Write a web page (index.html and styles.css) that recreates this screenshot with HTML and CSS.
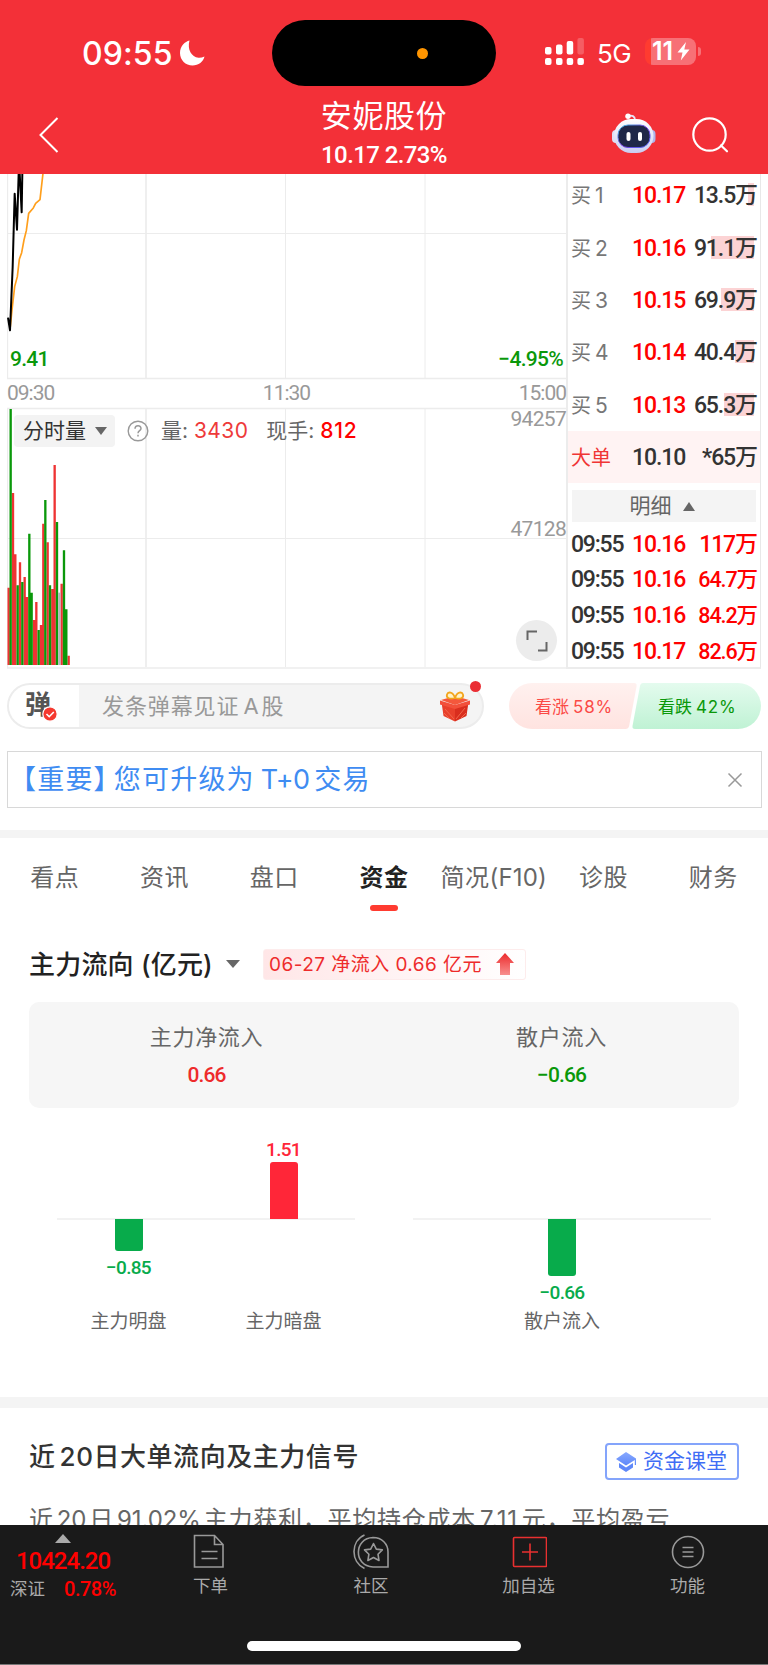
FILE: index.html
```html
<!DOCTYPE html>
<html lang="zh-CN">
<head>
    <meta charset="UTF-8">
    <meta name="viewport" content="width=device-width, initial-scale=1.0">
    <title>安妮股份</title>
    <link rel="stylesheet" href="styles.css">
</head>
<body>
    <header class="header">
        <div class="status-bar">
            <div class="status-left">
                <span class="clock">09:55</span>
                <svg class="moon" width="25" height="26" viewBox="0 0 25 26"><path d="M9.500.5C5 1.500 0 6 0 13c0 7 5.500 12.500 12.500 12.500 6 0 11-4 12-9-2 1-4 1.300-6 1.200C11.500 17 7 9.500 9.500.5z" fill="#fff"/></svg>
            </div>
            <div class="island"><span class="island-dot"></span></div>
            <div class="status-right">
                <svg width="39" height="27" viewBox="0 0 39 27" fill="#fff">
                    <rect x="0" y="9" width="6.500" height="7.500" rx="2"/>
                    <rect x="11" y="6.500" width="6.500" height="10" rx="2"/>
                    <rect x="21.700" y="3" width="6.500" height="13.500" rx="2"/>
                    <rect x="32.400" y="0" width="6.500" height="16.500" rx="2" opacity=".22"/>
                    <rect x="0" y="20" width="6.500" height="7" rx="2"/>
                    <rect x="11" y="20" width="6.500" height="7" rx="2"/>
                    <rect x="21.700" y="20" width="6.500" height="7" rx="2"/>
                    <rect x="32.400" y="20" width="6.500" height="7" rx="2"/>
                </svg>
                <span class="network">5G</span>
                <span class="battery">
                    <span class="battery-num">11</span>
                    <svg width="13" height="19" viewBox="0 0 12 19"><path d="M8.500 0L0 10.500h5L3.300 18.500 12 7.500H6.800z" fill="#fff"/></svg>
                </span>
                <span class="battery-cap"></span>
            </div>
        </div>
        <div class="nav-bar">
            <svg class="nav-back" width="20" height="36" viewBox="0 0 20 36"><path d="M18.500 1L1.500 18l17 17" fill="none" stroke="#fff" stroke-width="2"/></svg>
            <div class="nav-title">
                <h1 class="stock-name">安妮股份</h1>
                <p class="stock-price num">10.17 2.73%</p>
            </div>
            <div class="nav-actions">
                <svg width="44" height="41" viewBox="0 0 44 41">
                    <defs>
                        <linearGradient id="head" x1="0" y1="0" x2="0" y2="1"><stop offset="0" stop-color="#fff"/><stop offset="1" stop-color="#c9cdf2"/></linearGradient>
                        <linearGradient id="rim" x1="0" y1="0" x2="1" y2="1"><stop offset="0" stop-color="#39c5dc"/><stop offset=".5" stop-color="#7a3ce0"/><stop offset="1" stop-color="#4b6af0"/></linearGradient>
                    </defs>
                    <path d="M16 3c4-1 7 0 7 4" fill="none" stroke="#e6e6f8" stroke-width="1.800"/>
                    <circle cx="16" cy="3.200" r="2.700" fill="#fff"/>
                    <rect x="0" y="17" width="8" height="13" rx="4" fill="#dfe0f6"/>
                    <rect x="36" y="17" width="7.500" height="13" rx="4" fill="#aeb4ec"/>
                    <rect x="2" y="6" width="39.500" height="34" rx="17" fill="url(#head)"/>
                    <rect x="6" y="12" width="32" height="22.500" rx="10" fill="#1f2747" stroke="url(#rim)" stroke-width="1"/>
                    <rect x="14.500" y="19" width="4" height="9" rx="2" fill="#fff"/>
                    <rect x="26" y="19" width="4" height="9" rx="2" fill="#fff"/>
                </svg>
                <svg width="37" height="36" viewBox="0 0 37 36" fill="none" stroke="#fff" stroke-width="2.200"><circle cx="17.500" cy="17.500" r="16.200"/><path d="M29 28.500l6 5.800" stroke-linecap="round"/></svg>
            </div>
        </div>
    </header>

    <section class="quote">
        <div class="charts">
            <svg class="chart-canvas" width="561" height="495" viewBox="7 174 561 495">
                <g stroke="#ececec" fill="none">
                    <path d="M7 233.500h559M7 538.500h559" stroke-width="1.200"/>
                    <path d="M146 174v204M146 409v258" stroke-width="1.600"/>
                    <path d="M285.500 174v204M285.500 409v258M425 174v204M425 409v258" stroke-width="1"/>
                    <path d="M7.500 174v204.500h559M7.500 668V408.500h559" stroke-width="1.300"/>
                    <path d="M7 668h561" stroke-width="1.600"/>
                    <path d="M567 174v495" stroke-width="2"/>
                </g>
                <!-- price line and average line -->
                <g transform="translate(0 170) scale(.3333)" fill="none" stroke-linejoin="round">
                    <path d="M31 470l5-50 8-70 8-30 6-52 7-20 7-38 7-28 7-52 14-16 7-14 13-11 9-79" stroke="#ff9f1c" stroke-width="5"/>
                    <path d="M24 443l6 38 8-190 6-220 7 108 5-170 3 0 6 118 2-118" stroke="#000" stroke-width="6"/>
                </g>
                <!-- volume bars -->
                <g transform="translate(0 400) scale(.3333)" fill="none" stroke-width="7">
                    <path stroke="#ee3333" d="M26 563V795M39 279V795M46 463V795M60 487V795M74 531V795M81 591V795M102 660V795M109 606V795M123 675V795M130 371V795M143 427V795M157 567V795M164 195V795M185 551V795M206 767V795"/>
                    <path stroke="#0a980a" d="M32 27V795M53 556V795M67 546V795M88 401V795M95 578V795M116 690V795M136 300V795M150 556V795M171 366V795M192 451V795M199 628V795"/>
                    <path stroke="#b5b5b5" d="M178 578V795"/>
                </g>
            </svg>
            <div class="chart-labels">
                <div class="label-row price-low num"><span>9.41</span><span>−4.95%</span></div>
                <div class="label-row time-axis num"><span>09:30</span><span>11:30</span><span>15:00</span></div>
                <div class="volume-head">
                    <span class="volume-select">分时量<i class="caret-down"></i></span>
                    <svg class="help" width="22" height="22" viewBox="0 0 22 22"><circle cx="11" cy="11" r="9.800" fill="none" stroke="#999" stroke-width="1.400"/><path d="M8 8.800c0-4 6-4 6-.3 0 2.200-3 2.200-3 4.800M11 14.800v1.700" fill="none" stroke="#999" stroke-width="1.500"/></svg>
                    <span class="volume-text">量: <b class="vol">3430</b></span>
                    <span class="volume-text">现手: <b class="hand">812</b></span>
                </div>
                <span class="vol-max num">94257</span>
                <span class="vol-mid num">47128</span>
                <span class="expand"><svg width="22" height="22" viewBox="0 0 22 22" fill="none" stroke="#666" stroke-width="2"><path d="M1.500 10V1.500H11M20.500 12v8.500H12"/></svg></span>
            </div>
        </div>

        <aside class="depth">
            <ul class="bids">
                <li class="bid"><span class="bid-label">买<em>1</em></span><span class="bid-price num">10.17</span><span class="bid-vol num"><i class="depth-bar" style="width: 6px"></i>13.5万</span></li>
                <li class="bid"><span class="bid-label">买<em>2</em></span><span class="bid-price num">10.16</span><span class="bid-vol num"><i class="depth-bar" style="width: 43px"></i>91.1万</span></li>
                <li class="bid"><span class="bid-label">买<em>3</em></span><span class="bid-price num">10.15</span><span class="bid-vol num"><i class="depth-bar" style="width: 33px"></i>69.9万</span></li>
                <li class="bid"><span class="bid-label">买<em>4</em></span><span class="bid-price num">10.14</span><span class="bid-vol num"><i class="depth-bar" style="width: 19px"></i>40.4万</span></li>
                <li class="bid"><span class="bid-label">买<em>5</em></span><span class="bid-price num">10.13</span><span class="bid-vol num"><i class="depth-bar" style="width: 30px"></i>65.3万</span></li>
                <li class="bid big-order"><span class="bid-label">大单</span><span class="bid-price num">10.10</span><span class="bid-vol num">*65万</span></li>
            </ul>
            <div class="detail-toggle">明细<i class="caret-up"></i></div>
            <ul class="trades num">
                <li class="trade"><span>09:55</span><b>10.16</b><b class="amount">117万</b></li>
                <li class="trade"><span>09:55</span><b>10.16</b><b class="amount small">64.7万</b></li>
                <li class="trade"><span>09:55</span><b>10.16</b><b class="amount small">84.2万</b></li>
                <li class="trade"><span>09:55</span><b>10.17</b><b class="amount small">82.6万</b></li>
            </ul>
        </aside>
    </section>

    <section class="barrage">
        <div class="barrage-input">
            <span class="barrage-switch">弹<svg class="check" width="16" height="16" viewBox="0 0 16 16"><circle cx="8" cy="8" r="7.200" fill="#f5392f" stroke="#fff" stroke-width="1.200"/><path d="M4.500 8l2.700 2.700L11.800 6" fill="none" stroke="#fff" stroke-width="1.600"/></svg></span>
            <span class="barrage-placeholder">发条弹幕见证<span class="latin">A</span>股</span>
            <svg class="gift" width="30" height="32" viewBox="0 0 30 32">
                <path d="M1 10l14-4 14 4-14 5z" fill="#f4583c"/>
                <path d="M1.500 12L15 16v15.500L3.500 26z" fill="#e8402b"/>
                <path d="M28.500 12L15 16v15.500L26.500 26z" fill="#d92e1e"/>
                <path d="M0 10.500l15 4.500v4L0 14.500zM30 10.500L15 15v4l15-4.500z" fill="#f2503a"/>
                <path d="M5 19l9 10M4 23l6 6M25 18l-9 11M26 23l-5 5" stroke="#f2664a" stroke-width="1"/>
                <path d="M15 8C9 9.500 6 7.500 7 4.500s6-3 8 3.500zM15 8c6 1.500 9-.5 8-3.500s-6-3-8 3.500z" fill="#fff3c8" stroke="#f3a51c" stroke-width="1.800"/>
            </svg>
            <i class="red-dot"></i>
        </div>
        <div class="votes">
            <svg class="vote-shape" width="252" height="46" viewBox="0 0 252 46">
                <defs>
                    <linearGradient id="up" x1="0" y1="0" x2="0" y2="1"><stop offset="0" stop-color="#fff1ef"/><stop offset="1" stop-color="#ffe3e0"/></linearGradient>
                    <linearGradient id="down" x1="0" y1="0" x2="0" y2="1"><stop offset="0" stop-color="#e4fbee"/><stop offset="1" stop-color="#bff2d4"/></linearGradient>
                </defs>
                <path d="M23 0h102q3 0 2.600 3l-7.500 40q-.6 3-3.600 3H23a23 23 0 0 1 0-46z" fill="url(#up)"/>
                <path d="M134 0h95a23 23 0 0 1 0 46H126q-3 0-2.500-3l7.500-40q.6-3 3-3z" fill="url(#down)"/>
            </svg>
            <span class="vote vote-up">看涨<em>58%</em></span>
            <span class="vote vote-down">看跌<em>42%</em></span>
        </div>
    </section>

    <div class="notice">
        <span class="notice-text">【重要】<span class="notice-main">您可升级为<span class="latin">T+0</span>交易</span></span>
        <svg width="16" height="16" viewBox="0 0 16 16"><path d="M1.500 1.500l13 13M14.500 1.500l-13 13" stroke="#999" stroke-width="1.500"/></svg>
    </div>

    <nav class="tabs">
        <a class="tab">看点</a>
        <a class="tab">资讯</a>
        <a class="tab">盘口</a>
        <a class="tab active">资金</a>
        <a class="tab">简况<span>(F10)</span></a>
        <a class="tab">诊股</a>
        <a class="tab">财务</a>
    </nav>

    <section class="flow">
        <div class="flow-head">
            <h2 class="flow-title">主力流向 (亿元)</h2>
            <i class="caret-down"></i>
            <span class="flow-badge"><span>06-27 净流入 0.66 亿元</span>
                <svg width="18" height="22" viewBox="0 0 18 22"><defs><linearGradient id="arrow" x1="0" y1="0" x2="0" y2="1"><stop offset="0" stop-color="#ec2a2c"/><stop offset="1" stop-color="#f8908f"/></linearGradient></defs><path d="M9 0l9 10h-4v12H4V10H0z" fill="url(#arrow)"/></svg>
            </span>
        </div>
        <div class="flow-card">
            <div class="flow-item"><span class="flow-name">主力净流入</span><span class="flow-value num up">0.66</span></div>
            <div class="flow-item"><span class="flow-name">散户流入</span><span class="flow-value num down">−0.66</span></div>
        </div>
        <div class="bar-charts">
            <div class="bar-chart">
                <div class="bar-col negative"><i class="bar" style="height: 32px"></i><span class="bar-value num">−0.85</span><span class="bar-name">主力明盘</span></div>
                <div class="bar-col positive"><span class="bar-value num">1.51</span><i class="bar" style="height: 57px"></i><span class="bar-name">主力暗盘</span></div>
            </div>
            <div class="bar-chart">
                <div class="bar-col negative"><i class="bar" style="height: 57px"></i><span class="bar-value num">−0.66</span><span class="bar-name">散户流入</span></div>
            </div>
        </div>
    </section>

    <section class="signal">
        <div class="signal-head">
            <h2 class="signal-title">近<span>20</span>日大单流向及主力信号</h2>
            <a class="course">
                <svg width="20" height="20" viewBox="0 0 20 20"><defs><linearGradient id="cap" x1="0" y1="0" x2="0" y2="1"><stop offset="0" stop-color="#89a9ff"/><stop offset="1" stop-color="#5d87f9"/></linearGradient></defs><path d="M10 0L20 6.500V13h-1.200V8L10 13.500 0 7z" fill="url(#cap)"/><path d="M3 11l7 4.500 7-4.500v4.500L10 20l-7-4.500z" fill="#5f88f9"/></svg>
                <span>资金课堂</span>
            </a>
        </div>
        <p class="signal-text">近<span>20</span>日<span>91.02%</span>主力获利，平均持仓成本<span class="cost">7.11</span>元，平均盈亏</p>
    </section>

    <footer class="bottom-bar">
        <div class="index-box">
            <i class="caret-up"></i>
            <span class="index-value num">10424.20</span>
            <div class="index-line"><span>深证</span><span class="index-rate num">0.78%</span></div>
        </div>
        <div class="bottom-tabs">
            <a class="bottom-tab">
                <svg width="36" height="36" viewBox="0 0 36 36" fill="none" stroke="#999" stroke-width="1.600"><path d="M1.500 1.500h20l8.500 9v22.500h-28.500zM21.500 1.500v9h8.500M8.500 17.500h16M8.500 24.500h16"/></svg>
                <span>下单</span>
            </a>
            <a class="bottom-tab community">
                <svg width="36" height="36" viewBox="0 0 36 36" fill="none" stroke="#999" stroke-width="1.600"><path d="M11.500 1C-2.500 7-2.500 28 11.500 34.500M35 33H20C0 32 1 4 20 3.500 29 3.500 35 10 35 18z"/><path d="M20.500 9.500l2.800 5.600 6 .8-4.300 4.300 1 6.300-5.500-3-5.600 3 1-6.300-4.400-4.300 6.200-.8z" stroke-linejoin="round"/></svg>
                <span>社区</span>
            </a>
            <a class="bottom-tab">
                <svg width="36" height="36" viewBox="0 0 36 36" fill="none" stroke="#e93030" stroke-width="1.600"><rect x="2.500" y="3.500" width="33" height="29" rx="1"/><path d="M19 9.500v17M11 18h16"/></svg>
                <span>加自选</span>
            </a>
            <a class="bottom-tab">
                <svg width="36" height="36" viewBox="0 0 36 36" fill="none" stroke="#999" stroke-width="1.600"><circle cx="18" cy="18" r="15.500"/><path d="M12.500 13.500h11M12.500 18h11M12.500 22.500h11"/></svg>
                <span>功能</span>
            </a>
        </div>
        <div class="home-indicator"></div>
    </footer>
</body>
</html>
```
FILE: styles.css
```css
* {
    margin: 0;
    padding: 0;
    box-sizing: border-box;
}

body {
    width: 768px;
    height: 1665px;
    overflow: hidden;
    background: #fff;
    color: #333;
    font-family: Inter, 'Noto Sans CJK SC', sans-serif;
}

ul {
    list-style: none;
}

em,
i {
    font-style: normal;
}

svg {
    display: block;
    flex: none;
}

.num {
    font-family: Roboto, 'Noto Sans CJK SC', sans-serif;
    font-weight: 500;
}

.up {
    color: #ee2b2b;
}

.down {
    color: #0a980a;
}

.caret-down,
.caret-up {
    width: 0;
    height: 0;
    border: 6px solid transparent;
}

.caret-down {
    border-top: 8px solid #666;
    border-bottom: 0;
}

.caret-up {
    border-bottom: 9px solid #666;
    border-top: 0;
}

/* header */
.header {
    height: 174px;
    background: #f33038;
    color: #fff;
}

.status-bar {
    display: flex;
    height: 98px;
    padding-top: 20px;
}

.status-left {
    display: flex;
    width: 272px;
    padding: 20px 0 0 82px;
}

.clock {
    width: 98px;
    font-size: 32px;
    font-weight: 500;
    line-height: 28px;
    letter-spacing: 0.1px;
}

.island {
    display: flex;
    align-items: center;
    width: 224px;
    height: 66px;
    padding-left: 145px;
    border-radius: 33px;
    background: #000;
}

.island-dot {
    width: 11px;
    height: 11px;
    border-radius: 50%;
    background: #ff9500;
}

.status-right {
    display: flex;
    padding: 18px 0 0 49px;
}

.network {
    width: 61px;
    padding-left: 13px;
    font-size: 26px;
    line-height: 31px;
    letter-spacing: -0.5px;
}

.battery {
    display: flex;
    align-items: center;
    width: 51px;
    height: 27px;
    padding-left: 7px;
    border-radius: 8px;
    background: linear-gradient(90deg, #ff3b30 6px, #f77076 6px);
}

.battery-num {
    width: 25px;
    font-size: 25px;
    font-weight: 600;
    line-height: 27px;
}

.battery-cap {
    width: 3px;
    height: 9px;
    margin: 9px 0 0 2px;
    border-radius: 0 4px 4px 0;
    background: #f77076;
}

.nav-bar {
    display: grid;
    grid-template-columns: 156px 1fr 156px;
    height: 76px;
    padding: 0 39px;
}

.nav-back {
    margin-top: 19px;
}

.nav-title {
    text-align: center;
}

.stock-name {
    font-size: 31px;
    font-weight: 400;
    line-height: 36px;
    letter-spacing: 0.6px;
}

.stock-price {
    margin-top: 7px;
    font-size: 24px;
    line-height: 28px;
    letter-spacing: -0.6px;
}

.nav-actions {
    display: flex;
    justify-content: flex-end;
    gap: 36px;
    padding-top: 15px;
}

.nav-actions svg + svg {
    margin-top: 4px;
}

/* charts and order book */
.quote {
    display: flex;
    height: 495px;
    padding: 0 7px;
}

.charts {
    position: relative;
    width: 561px;
}

.chart-labels {
    position: absolute;
    inset: 0;
    padding-top: 172px;
}

.label-row {
    display: flex;
    justify-content: space-between;
    font-size: 21px;
    line-height: 26px;
    letter-spacing: -0.7px;
}

.price-low {
    padding: 0 5px 0 3px;
    color: #0a980a;
}

.time-axis {
    margin-top: 8px;
    padding-right: 2px;
    color: #999;
    font-weight: 400;
    letter-spacing: -1px;
}

.volume-head {
    display: flex;
    align-items: center;
    height: 32px;
    margin: 9px 0 0 7px;
}

.volume-select {
    display: flex;
    align-items: center;
    width: 101px;
    height: 32px;
    padding-left: 9px;
    border-radius: 4px;
    background: #f3f3f3;
    font-size: 21px;
    line-height: 32px;
}

.volume-select .caret-down {
    margin-left: 9px;
}

.help {
    margin: 0 12px 0 12px;
}

.volume-text {
    height: 32px;
    margin-right: 18px;
    color: #666;
    font-size: 21px;
    line-height: 32px;
    white-space: nowrap;
}

.volume-text b {
    font-weight: 400;
}

.vol {
    color: #ee3a3a;
    letter-spacing: 0.4px;
}

.volume-text .hand {
    color: #f00;
    font-weight: 500;
    letter-spacing: 0.7px;
}

.vol-max,
.vol-mid,
.expand {
    position: absolute;
    right: 2px;
    color: #999;
    font-size: 21px;
    font-weight: 400;
    line-height: 24px;
    letter-spacing: -0.7px;
}

.vol-max {
    top: 233px;
}

.vol-mid {
    top: 343px;
}

.expand {
    display: flex;
    align-items: center;
    justify-content: center;
    top: 446px;
    right: 11px;
    width: 41px;
    height: 41px;
    border-radius: 50%;
    background: #ececec;
}

.depth {
    width: 193px;
    overflow: hidden;
    border-right: 1px solid #e8e8e8;
    border-bottom: 2px solid #ececec;
}

.bids {
    margin-top: -5px;
}

.bid {
    display: flex;
    align-items: center;
    height: 52.4px;
    padding: 2px 3px 0 3px;
    font-size: 23px;
    line-height: 30px;
}

.bid-label {
    width: 61px;
    color: #777;
    font-size: 20px;
}

.bid-label em {
    margin-left: 4px;
    font-size: 21px;
}

.bid-price {
    width: 55px;
    color: #f00;
    letter-spacing: -1.1px;
}

.bid-vol {
    position: relative;
    flex: 1;
    text-align: right;
    letter-spacing: -1.1px;
    white-space: nowrap;
}

.depth-bar {
    position: absolute;
    top: 2px;
    right: 3px;
    z-index: -1;
    height: 23px;
    background: #fcd3d4;
}

.big-order {
    background: #fff3f3;
}

.big-order .bid-label {
    color: #f03535;
}

.big-order .bid-price {
    color: #333;
}

.detail-toggle {
    display: flex;
    align-items: center;
    justify-content: center;
    height: 32px;
    margin: 7px 4px 3px;
    padding: 0 4px 0 0;
    background: #f4f4f4;
    color: #666;
    font-size: 21px;
    line-height: 32px;
}

.detail-toggle .caret-up {
    margin-left: 11px;
}

.trade {
    display: flex;
    align-items: center;
    height: 35.7px;
    padding: 3px 3px 0 3px;
    font-size: 23px;
    line-height: 32px;
    letter-spacing: -1.1px;
}

.trade span {
    width: 61px;
    letter-spacing: -1.2px;
}

.trade b {
    color: #f00;
    font-weight: 500;
}

.trade .amount {
    flex: 1;
    text-align: right;
    white-space: nowrap;
}

.trade .small {
    font-size: 21.5px;
}

/* barrage */
.barrage {
    display: flex;
    justify-content: space-between;
    padding: 14px 7px 0 7px;
}

.barrage-input {
    position: relative;
    display: flex;
    align-items: center;
    width: 477px;
    height: 46px;
    border: 2px solid #ececec;
    border-radius: 23px;
    background: #f4f4f4;
}

.barrage-switch {
    position: relative;
    width: 70px;
    height: 42px;
    padding-left: 16px;
    border-radius: 21px 0 0 21px;
    background: #fff;
    color: #555;
    font-size: 26px;
    font-weight: 700;
    line-height: 40px;
}

.check {
    position: absolute;
    left: 33px;
    top: 21px;
}

.barrage-placeholder {
    width: 361px;
    padding-left: 23px;
    color: #999;
    font-size: 22px;
    line-height: 42px;
    letter-spacing: 0.9px;
}

.barrage-placeholder .latin {
    margin: 0 2px 0 4px;
}

.red-dot {
    position: absolute;
    right: 1px;
    top: -4px;
    width: 11px;
    height: 11px;
    border-radius: 50%;
    background: #ea2e34;
}

.votes {
    position: relative;
    display: flex;
    width: 252px;
    height: 46px;
}

.vote-shape {
    position: absolute;
    inset: 0;
}

.vote {
    position: relative;
    width: 126px;
    padding-left: 26px;
    font-size: 17px;
    line-height: 48px;
    white-space: nowrap;
}

.vote em {
    margin-left: 4px;
    letter-spacing: 0.8px;
}

.vote-up {
    color: #fb4a46;
}

.vote-down {
    padding-left: 23px;
    color: #0a980a;
}

.notice {
    display: flex;
    align-items: center;
    justify-content: space-between;
    height: 57px;
    margin: 22px 6px 22px 7px;
    padding: 0 18px 0 1px;
    border: 1px solid #d8d8d8;
}

.notice-text {
    display: flex;
    height: 56px;
    color: #3f8cf2;
    font-size: 27px;
    line-height: 56px;
    letter-spacing: 1.2px;
}

.notice-main {
    margin-left: -8px;
}

.notice-text .latin {
    margin: 0 5px 0 6px;
    letter-spacing: -0.6px;
}

.tabs {
    display: flex;
    height: 104px;
    border-top: 8px solid #f4f4f4;
}

.tab {
    flex: 1 0 0;
    display: flex;
    justify-content: center;
    height: 74px;
    padding-top: 20px;
    color: #666;
    font-size: 24px;
    line-height: 40px;
    letter-spacing: 0.5px;
    white-space: nowrap;
}

.tab span {
    letter-spacing: 0.2px;
}

.active {
    position: relative;
    color: #222;
    font-weight: 600;
}

.active::after {
    content: '';
    position: absolute;
    left: 41px;
    bottom: 1px;
    width: 28px;
    height: 6px;
    border-radius: 3px;
    background: #ff3b30;
}

/* fund flow */
.flow {
    height: 463px;
    padding: 14px 29px 0;
}

.flow-head {
    display: flex;
    align-items: center;
    height: 32px;
}

.flow-title {
    width: 197px;
    height: 32px;
    color: #222;
    font-size: 26px;
    font-weight: 500;
    line-height: 33px;
    letter-spacing: 0.2px;
    white-space: nowrap;
}

.flow-head .caret-down {
    border-width: 8px 7px 0;
}

.flow-badge {
    display: flex;
    align-items: center;
    justify-content: space-between;
    width: 263px;
    height: 31px;
    margin-left: 23px;
    padding: 0 11px 0 5px;
    border: 1px solid #fdecec;
    border-radius: 3px;
    background: linear-gradient(90deg, #ffe6e7, #fff);
    color: #ee2b2b;
    font-size: 19px;
    line-height: 29px;
    letter-spacing: 0.45px;
    white-space: nowrap;
}

.flow-card {
    display: flex;
    height: 106px;
    margin-top: 22px;
    padding-top: 18px;
    border-radius: 10px;
    background: #f6f6f6;
}

.flow-item {
    display: flex;
    flex: 1;
    flex-direction: column;
    align-items: center;
}

.flow-name {
    color: #666;
    font-size: 22px;
    line-height: 34px;
    letter-spacing: 0.7px;
}

.flow-value {
    margin-top: 7px;
    font-size: 21px;
    line-height: 29px;
    letter-spacing: -0.9px;
}

.bar-charts {
    display: flex;
    gap: 58px;
    padding: 26px 28px 0;
}

.bar-chart {
    display: flex;
    justify-content: center;
    width: 298px;
    height: 204px;
    background: linear-gradient(#f2f2f2, #f2f2f2) 0 84px / 100% 2px no-repeat;
}

.bar-col {
    display: flex;
    flex: 1;
    flex-direction: column;
    align-items: center;
}

.bar-chart .bar-col:first-child:not(:last-child) {
    padding-right: 5px;
}

.bar-chart .bar-col:nth-child(2) {
    padding-left: 7px;
}

.bar {
    flex: none;
    width: 28px;
}

.bar-value {
    font-size: 19px;
    line-height: 24px;
    letter-spacing: -0.7px;
}

.positive {
    padding-top: 4px;
    color: #ff2638;
}

.positive .bar {
    border-radius: 3px 3px 0 0;
    background: #ff2638;
}

.negative {
    padding-top: 85px;
    color: #08ab4b;
}

.negative .bar {
    border-radius: 0 0 3px 3px;
    background: #08ab4b;
}

.negative .bar-value {
    margin-top: 5px;
}

.bar-name {
    margin-top: auto;
    color: #666;
    font-size: 19px;
    line-height: 32px;
}

.signal {
    height: 128px;
    padding: 34px 29px 0;
    border-top: 11px solid #f4f4f4;
    overflow: hidden;
}

.signal-head {
    display: flex;
    justify-content: space-between;
    height: 46px;
}

.signal-title {
    color: #333;
    font-size: 26px;
    font-weight: 500;
    line-height: 30px;
    letter-spacing: 0.55px;
}

.signal-title span {
    margin: 0 0 0 4px;
}

.course {
    display: flex;
    align-items: center;
    gap: 7px;
    width: 134px;
    height: 37px;
    margin-top: 1px;
    padding: 0 9px 0 9px;
    border: 2px solid #84a4fb;
    border-radius: 4px;
    color: #3f6df5;
    font-size: 21px;
    white-space: nowrap;
}

.course span {
    height: 33px;
    line-height: 32px;
}

.signal-text {
    margin-top: 12px;
    color: #666;
    font-size: 24px;
    line-height: 40px;
    letter-spacing: 0.75px;
    white-space: nowrap;
}

.signal-text span {
    margin: 0 3px;
    letter-spacing: -0.1px;
}

.signal-text .cost {
    margin: 0 4px;
    letter-spacing: 0.7px;
}

/* bottom bar */
.bottom-bar {
    position: relative;
    display: flex;
    height: 140px;
    border-bottom: 1px solid #777;
    background: #1a1a1a;
    color: #aaa;
}

.index-box {
    display: flex;
    flex-direction: column;
    align-items: center;
    width: 126px;
    padding-top: 9px;
}

.index-box .caret-up {
    border-width: 0 8px 9px;
    border-bottom-color: #aaa;
}

.index-value {
    margin-top: 5px;
    color: #f00;
    font-size: 24px;
    line-height: 26px;
    letter-spacing: -1px;
}

.index-line {
    display: flex;
    gap: 19px;
    margin-top: 2px;
    font-size: 17.5px;
    line-height: 26px;
}

.index-rate {
    color: #f00;
    font-size: 20px;
    letter-spacing: -0.5px;
}

.bottom-tabs {
    display: flex;
    flex: 1;
}

.bottom-tab {
    display: flex;
    flex-direction: column;
    align-items: center;
    width: 159px;
    padding: 9px 0 0 10px;
    font-size: 17.5px;
    line-height: 32px;
}

.community {
    padding-left: 13px;
}

.home-indicator {
    position: absolute;
    left: 247px;
    bottom: 13px;
    width: 274px;
    height: 10px;
    border-radius: 5px;
    background: #fff;
}
```
